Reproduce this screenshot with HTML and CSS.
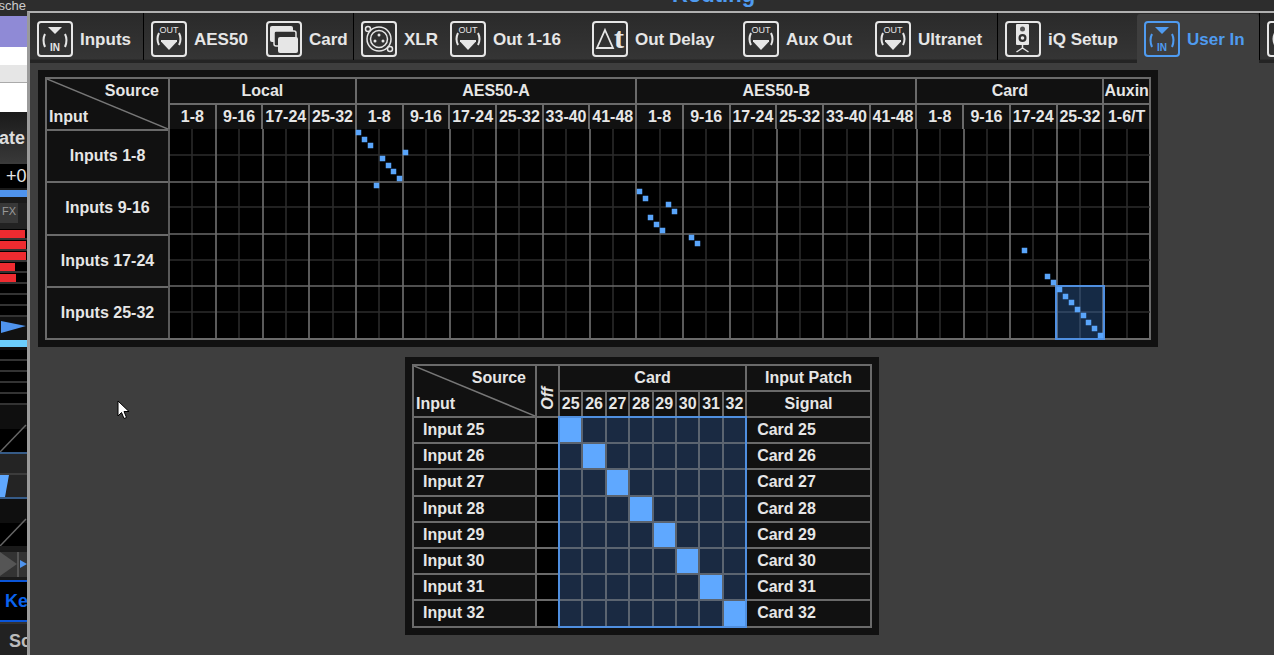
FILE: index.html
```html
<!DOCTYPE html>
<html lang="en">
<head>
    <meta charset="UTF-8">
    <title>Routing</title>
    <link rel="stylesheet" href="styles.css">
</head>
<body>
    <svg class="icon-defs" width="0" height="0">
        <symbol id="icon-in" viewBox="0 0 36 36">
            <rect x="1" y="1" width="34" height="34" rx="3" fill="none" stroke="currentColor" stroke-width="2"/>
            <path d="M11 6h14l-7 7z" fill="currentColor"/>
            <path d="M8 13q-3 6 0 13M28 13q3 6 0 13" fill="none" stroke="currentColor" stroke-width="2"/>
            <text x="18" y="30" text-anchor="middle" class="icon-in-label">IN</text>
        </symbol>
        <symbol id="icon-out" viewBox="0 0 36 36">
            <rect x="1" y="1" width="34" height="34" rx="3" fill="none" stroke="currentColor" stroke-width="2"/>
            <text x="18" y="12" text-anchor="middle" class="icon-label">OUT</text>
            <path d="M8 12q-3 6 0 12M28 12q3 6 0 12" fill="none" stroke="currentColor" stroke-width="2"/>
            <path d="M10 19h16v1.500l-8 8.500-8-8.500z" fill="currentColor"/>
        </symbol>
        <symbol id="icon-card" viewBox="0 0 36 36">
            <rect x="1" y="1" width="34" height="34" rx="3" fill="none" stroke="currentColor" stroke-width="2"/>
            <rect x="4" y="5" width="23" height="16" rx="2" fill="currentColor"/>
            <rect x="8" y="10" width="22" height="15" rx="2" fill="#2f2f2f" stroke="currentColor" stroke-width="1.500"/>
            <rect x="12" y="16" width="20" height="16" rx="2" fill="currentColor"/>
        </symbol>
        <symbol id="icon-xlr" viewBox="0 0 36 36">
            <rect x="1" y="1" width="34" height="34" rx="3" fill="none" stroke="currentColor" stroke-width="2"/>
            <circle cx="18" cy="18" r="12" fill="none" stroke="currentColor" stroke-width="1.500"/>
            <circle cx="18" cy="18" r="8.500" fill="none" stroke="currentColor" stroke-width="1.500"/>
            <circle cx="7" cy="8" r="2.500" fill="#2f2f2f" stroke="currentColor" stroke-width="1.500"/>
            <circle cx="29" cy="28" r="2.500" fill="#2f2f2f" stroke="currentColor" stroke-width="1.500"/>
            <circle cx="18" cy="14" r="1.500" fill="currentColor"/>
            <circle cx="14" cy="20" r="1.500" fill="currentColor"/>
            <circle cx="22" cy="20" r="1.500" fill="currentColor"/>
        </symbol>
        <symbol id="icon-delay" viewBox="0 0 36 36">
            <rect x="1" y="1" width="34" height="34" rx="3" fill="none" stroke="currentColor" stroke-width="2"/>
            <path d="M13 9l8 18H5z" fill="none" stroke="currentColor" stroke-width="1.800"/>
            <text x="27" y="27" text-anchor="middle" class="icon-t">t</text>
        </symbol>
        <symbol id="icon-speaker" viewBox="0 0 36 36">
            <rect x="1" y="1" width="34" height="34" rx="3" fill="none" stroke="currentColor" stroke-width="2"/>
            <rect x="11" y="3" width="13" height="21" rx="1" fill="currentColor"/>
            <circle cx="17.500" cy="8" r="2.500" fill="#555"/>
            <circle cx="17.500" cy="17" r="4" fill="#2f2f2f"/>
            <circle cx="17.500" cy="17" r="1.800" fill="currentColor"/>
            <path d="M17.500 24v4M17.500 27l-6 4M17.500 27l6 4" fill="none" stroke="currentColor" stroke-width="1.500"/>
        </symbol>
    </svg>

    <aside class="side-strip">
        <div class="strip-caption"><span>ösche</span></div>
        <div class="strip-purple"></div>
        <div class="strip-white"></div>
        <div class="strip-pale"></div>
        <div class="strip-white strip-tall"></div>
        <div class="strip-name">ate</div>
        <div class="strip-gain">+0</div>
        <div class="strip-level"></div>
        <div class="strip-fx"><span>FX</span></div>
        <div class="meter"><i class="bar-red" style="width:25px"></i></div>
        <div class="meter"><i class="bar-red" style="width:26px"></i></div>
        <div class="meter"><i class="bar-red" style="width:26px"></i></div>
        <div class="meter"><i class="bar-red" style="width:15px"></i></div>
        <div class="meter"><i class="bar-red" style="width:16px"></i></div>
        <div class="meter"></div>
        <div class="meter"></div>
        <div class="meter"></div>
        <svg class="strip-marker" width="27" height="20"><path d="M1 4l25 5-25 7z" fill="#4f94ee"/></svg>
        <div class="strip-cyan"></div>
        <div class="meter"></div>
        <div class="meter"></div>
        <div class="meter"></div>
        <div class="meter"></div>
        <div class="meter"></div>
        <svg width="27" height="47"><rect width="27" height="24" fill="#0f0f0f"/><rect y="24" width="27" height="23" fill="#000"/><path d="M0 47l26-27" stroke="#666" stroke-width="1.500"/></svg>
        <svg width="27" height="47"><rect width="27" height="47" fill="#242424"/><path d="M0 1h27M0 46h27" stroke="#3c6ea8" stroke-width="1.500"/><path d="M0 23h9l-4 22H0z" fill="#5fa8ff"/><path d="M0 22h27" stroke="#555"/></svg>
        <svg width="27" height="47"><rect width="27" height="24" fill="#0f0f0f"/><rect y="24" width="27" height="23" fill="#000"/><path d="M0 47l26-27" stroke="#666" stroke-width="1.500"/></svg>
        <svg class="strip-play" width="27" height="25"><rect width="27" height="25" fill="#333"/><path d="M0 0l17 12L0 24z" fill="#555"/><path d="M18 0v25" stroke="#555" stroke-width="2"/><path d="M20 8l7 4-7 4z" fill="#4f94ee"/></svg>
        <div class="strip-key">Ke</div>
        <div class="strip-solo">So</div>
    </aside>

    <div class="window">
        <div class="title-bar"><span class="title-text">Routing</span></div>
        <div class="frame">
            <nav class="tab-bar">
                <a class="tab"><svg class="tab-icon"><use href="#icon-in"/></svg>Inputs</a>
                <a class="tab tab-split"><svg class="tab-icon"><use href="#icon-out"/></svg>AES50</a>
                <a class="tab"><svg class="tab-icon"><use href="#icon-card"/></svg>Card</a>
                <a class="tab tab-split"><svg class="tab-icon"><use href="#icon-xlr"/></svg>XLR</a>
                <a class="tab"><svg class="tab-icon"><use href="#icon-out"/></svg>Out 1-16</a>
                <a class="tab"><svg class="tab-icon"><use href="#icon-delay"/></svg>Out Delay</a>
                <a class="tab"><svg class="tab-icon"><use href="#icon-out"/></svg>Aux Out</a>
                <a class="tab"><svg class="tab-icon"><use href="#icon-out"/></svg>Ultranet</a>
                <a class="tab tab-split"><svg class="tab-icon"><use href="#icon-speaker"/></svg>iQ Setup</a>
                <a class="tab tab-active"><svg class="tab-icon"><use href="#icon-in"/></svg>User In</a>
                <a class="tab tab-split"><svg class="tab-icon"><use href="#icon-out"/></svg></a>
            </nav>

            <main class="content">
                <section class="panel">
                    <div class="routing-grid">
                        <div class="cell corner">
                            <svg class="corner-line" viewBox="0 0 100 100" preserveAspectRatio="none"><path d="M0 0L100 100" vector-effect="non-scaling-stroke"/></svg>
                            <span class="corner-source">Source</span>
                            <span class="corner-input">Input</span>
                        </div>
                        <div class="cell head span-4">Local</div>
                        <div class="cell head span-6">AES50-A</div>
                        <div class="cell head span-6">AES50-B</div>
                        <div class="cell head span-4">Card</div>
                        <div class="cell head">Auxin</div>

                        <div class="cell">1-8</div><div class="cell">9-16</div><div class="cell">17-24</div><div class="cell">25-32</div>
                        <div class="cell">1-8</div><div class="cell">9-16</div><div class="cell">17-24</div><div class="cell">25-32</div><div class="cell">33-40</div><div class="cell">41-48</div>
                        <div class="cell">1-8</div><div class="cell">9-16</div><div class="cell">17-24</div><div class="cell">25-32</div><div class="cell">33-40</div><div class="cell">41-48</div>
                        <div class="cell">1-8</div><div class="cell">9-16</div><div class="cell">17-24</div><div class="cell">25-32</div>
                        <div class="cell">1-6/T</div>

                        <div class="cell row-label">Inputs 1-8</div>
                        <svg class="crosspoints" viewBox="-1 0 981 209">
                            <path class="line-dim" d="M23 0V209M70 0V209M117 0V209M164 0V209M210 0V209M257 0V209M304 0V209M350 0V209M397 0V209M444 0V209M491 0V209M537 0V209M584 0V209M631 0V209M678 0V209M724 0V209M771 0V209M818 0V209M864 0V209M911 0V209M958 0V209M0 26H981M0 78H981M0 131H981M0 183H981"/>
                            <path class="line-main" d="M0 0V209M47 0V209M94 0V209M140 0V209M187 0V209M234 0V209M281 0V209M327 0V209M374 0V209M421 0V209M467 0V209M514 0V209M561 0V209M608 0V209M654 0V209M701 0V209M748 0V209M795 0V209M841 0V209M888 0V209M934 0V209M0 53H981M0 105H981M0 157H981"/>
                            <rect class="selection-box" x="887" y="157" width="48" height="53"/>
                            <g class="dots">
                                <rect x="187" y="1" width="5" height="5"/><rect x="193" y="8" width="5" height="5"/><rect x="199" y="14" width="5" height="5"/>
                                <rect x="234" y="21" width="5" height="5"/><rect x="211" y="27" width="5" height="5"/><rect x="217" y="34" width="5" height="5"/>
                                <rect x="222" y="40" width="5" height="5"/><rect x="228" y="47" width="5" height="5"/><rect x="205" y="54" width="5" height="5"/>
                                <rect x="468" y="60" width="5" height="5"/><rect x="474" y="67" width="5" height="5"/><rect x="497" y="73" width="5" height="5"/>
                                <rect x="503" y="80" width="5" height="5"/><rect x="479" y="86" width="5" height="5"/><rect x="485" y="93" width="5" height="5"/>
                                <rect x="491" y="99" width="5" height="5"/><rect x="520" y="106" width="5" height="5"/><rect x="526" y="112" width="5" height="5"/>
                                <rect x="853" y="119" width="5" height="5"/><rect x="876" y="145" width="5" height="5"/><rect x="882" y="151" width="5" height="5"/>
                                <rect x="888" y="158" width="5" height="5"/><rect x="894" y="165" width="5" height="5"/><rect x="900" y="171" width="5" height="5"/>
                                <rect x="906" y="178" width="5" height="5"/><rect x="912" y="184" width="5" height="5"/><rect x="917" y="191" width="5" height="5"/>
                                <rect x="923" y="197" width="5" height="5"/><rect x="929" y="204" width="5" height="5"/>
                            </g>
                        </svg>
                        <div class="cell row-label">Inputs 9-16</div>
                        <div class="cell row-label">Inputs 17-24</div>
                        <div class="cell row-label">Inputs 25-32</div>
                    </div>
                </section>

                <section class="panel panel-patch">
                    <div class="patch-grid">
                        <div class="cell corner">
                            <svg class="corner-line" viewBox="0 0 100 100" preserveAspectRatio="none"><path d="M0 0L100 100" vector-effect="non-scaling-stroke"/></svg>
                            <span class="corner-source">Source</span>
                            <span class="corner-input">Input</span>
                        </div>
                        <div class="cell cell-off"><span>Off</span></div>
                        <div class="cell head span-8">Card</div>
                        <div class="cell head">Input Patch</div>

                        <div class="cell">25</div><div class="cell">26</div><div class="cell">27</div><div class="cell">28</div><div class="cell">29</div><div class="cell">30</div><div class="cell">31</div><div class="cell">32</div>
                        <div class="cell">Signal</div>

                        <div class="cell patch-name">Input 25</div><i class="off"></i><i class="pt on"></i><i class="pt"></i><i class="pt"></i><i class="pt"></i><i class="pt"></i><i class="pt"></i><i class="pt"></i><i class="pt"></i><div class="cell patch-signal">Card 25</div>
                        <div class="cell patch-name">Input 26</div><i class="off"></i><i class="pt"></i><i class="pt on"></i><i class="pt"></i><i class="pt"></i><i class="pt"></i><i class="pt"></i><i class="pt"></i><i class="pt"></i><div class="cell patch-signal">Card 26</div>
                        <div class="cell patch-name">Input 27</div><i class="off"></i><i class="pt"></i><i class="pt"></i><i class="pt on"></i><i class="pt"></i><i class="pt"></i><i class="pt"></i><i class="pt"></i><i class="pt"></i><div class="cell patch-signal">Card 27</div>
                        <div class="cell patch-name">Input 28</div><i class="off"></i><i class="pt"></i><i class="pt"></i><i class="pt"></i><i class="pt on"></i><i class="pt"></i><i class="pt"></i><i class="pt"></i><i class="pt"></i><div class="cell patch-signal">Card 28</div>
                        <div class="cell patch-name">Input 29</div><i class="off"></i><i class="pt"></i><i class="pt"></i><i class="pt"></i><i class="pt"></i><i class="pt on"></i><i class="pt"></i><i class="pt"></i><i class="pt"></i><div class="cell patch-signal">Card 29</div>
                        <div class="cell patch-name">Input 30</div><i class="off"></i><i class="pt"></i><i class="pt"></i><i class="pt"></i><i class="pt"></i><i class="pt"></i><i class="pt on"></i><i class="pt"></i><i class="pt"></i><div class="cell patch-signal">Card 30</div>
                        <div class="cell patch-name">Input 31</div><i class="off"></i><i class="pt"></i><i class="pt"></i><i class="pt"></i><i class="pt"></i><i class="pt"></i><i class="pt"></i><i class="pt on"></i><i class="pt"></i><div class="cell patch-signal">Card 31</div>
                        <div class="cell patch-name">Input 32</div><i class="off"></i><i class="pt"></i><i class="pt"></i><i class="pt"></i><i class="pt"></i><i class="pt"></i><i class="pt"></i><i class="pt"></i><i class="pt on"></i><div class="cell patch-signal">Card 32</div>

                        <div class="patch-outline"></div>
                    </div>
                </section>
            </main>
        </div>
    </div>

    <svg class="cursor" width="14" height="20" viewBox="0 0 14 20">
        <path d="M1 1v15l3.500-3.500 2.500 6 2.500-1-2.500-6h5z" fill="#fff" stroke="#000"/>
    </svg>
</body>
</html>
```

FILE: styles.css
```css
* {
    box-sizing: border-box;
}
html, body {
    margin: 0;
    height: 100%;
}
body {
    display: flex;
    width: 1274px;
    height: 655px;
    overflow: hidden;
    position: relative;
    background-color: #3e3e3e;
    font-family: "Liberation Sans", Arial, sans-serif;
    font-weight: bold;
    font-size: 16px;
    color: #e6e6e6;
}
.icon-defs {
    position: absolute;
}
.icon-label {
    font-family: "Liberation Sans", Arial, sans-serif;
    font-size: 9px;
    font-weight: normal;
    fill: currentColor;
}
.icon-in-label {
    font-family: "Liberation Sans", Arial, sans-serif;
    font-size: 10px;
    font-weight: bold;
    fill: currentColor;
}
.icon-t {
    font-family: "Liberation Serif", serif;
    font-size: 30px;
    font-weight: bold;
    fill: currentColor;
}

/* channel strip cut off on the left */
.side-strip {
    flex: 0 0 27px;
    height: 655px;
    overflow: hidden;
    background-color: #1a1a1a;
}
.side-strip svg {
    display: block;
}
.strip-caption {
    display: flex;
    justify-content: flex-end;
    height: 16px;
    overflow: hidden;
    background-color: #2c2c2c;
    padding-right: 1px;
    font-size: 13px;
    font-weight: normal;
    line-height: 12px;
    white-space: nowrap;
    color: #ccc;
}
.strip-caption span {
    flex: none;
}
.strip-purple {
    height: 31px;
    background-color: #8f8ad6;
}
.strip-white {
    height: 18px;
    background-color: #fff;
}
.strip-tall {
    height: 30px;
    border-top: 1px solid #aaa;
}
.strip-pale {
    height: 17px;
    background-color: #e6e6e6;
}
.strip-name {
    height: 52px;
    margin-left: -1px;
    padding-top: 16px;
    background: linear-gradient(#1a1a1a, #383838);
    border-bottom: 2px solid #3a3a3a;
    font-size: 18px;
    line-height: 20px;
    white-space: nowrap;
    color: #ddd;
}
.strip-gain {
    height: 24px;
    background-color: #000;
    padding-left: 6px;
    font-size: 18px;
    font-weight: normal;
    line-height: 24px;
    white-space: nowrap;
    overflow: hidden;
}
.strip-level {
    height: 15px;
    border-top: 2px solid #1a1a1a;
    border-bottom: 6px solid #1a1a1a;
    background-clip: padding-box;
    background-color: #4f94ee;
}
.strip-fx {
    height: 26px;
    background-color: #222;
}
.strip-fx span {
    display: block;
    width: 18px;
    height: 20px;
    background-color: #383838;
    font-size: 11px;
    font-weight: normal;
    line-height: 16px;
    text-align: center;
    color: #999;
}
.meter {
    height: 11px;
    padding-top: 1px;
    background-color: #000;
    border-bottom: 2px solid #333;
}
.bar-red {
    display: block;
    height: 8px;
    background-color: #ee2b30;
}
.strip-marker {
    background-color: #111;
}
.strip-cyan {
    height: 13px;
    border-top: 3px solid #111;
    border-bottom: 3px solid #111;
    background-clip: padding-box;
    background-color: #6bcdfb;
}
.strip-play {
    margin-top: 6px;
}
.strip-key {
    height: 42px;
    margin-top: 3px;
    background-color: #000;
    border-top: 2px solid #0a55d8;
    border-bottom: 2px solid #0a55d8;
    padding-left: 5px;
    font-size: 18px;
    line-height: 38px;
    white-space: nowrap;
    overflow: hidden;
    color: #0a63ee;
}
.strip-solo {
    height: 40px;
    border-top: 2px solid #333;
    background-color: #222;
    padding-left: 9px;
    font-size: 18px;
    line-height: 34px;
    white-space: nowrap;
    overflow: hidden;
    color: #bbb;
}

/* routing window */
.window {
    flex: 1;
    min-width: 0;
    display: flex;
    flex-direction: column;
}
.title-bar {
    height: 11px;
    flex: none;
    overflow: hidden;
    background-color: #2d2d2d;
    padding-left: 645px;
}
.title-text {
    display: block;
    margin-top: -18px;
    font-size: 22px;
    line-height: 26px;
    color: #4f9bf0;
}
.frame {
    flex: 1;
    min-height: 0;
    overflow: hidden;
    border-top: 2px solid #b0b0b0;
    border-left: 3px solid #9a9a9a;
}
.tab-bar {
    height: 50px;
    margin-left: -1px;
    display: grid;
    grid-template-columns: 114px 115px 95px 89px 142px 151px 132px 130px 140px 122px 1fr;
    background: linear-gradient(#2a2a2a 0, #353535 46px, #242424 47px, #242424 50px);
}
.tab {
    display: flex;
    align-items: flex-start;
    gap: 7px;
    height: 47px;
    padding: 8px 0 0 7px;
    border-left: 1px solid transparent;
    font-size: 17px;
    line-height: 38px;
    color: #e6e6e6;
    white-space: nowrap;
}
.tab-split {
    border-left-color: #000;
}
.tab-active {
    height: 50px;
    margin-top: 1px;
    padding: 7px 0 0 6px;
    border-radius: 3px 3px 0 0;
    background-color: #3e3e3e;
    color: #4f9bf0;
}
.tab-icon {
    flex: none;
    width: 36px;
    height: 36px;
}
.content {
    padding: 7px 0 0 8px;
}

.panel {
    width: max-content;
    padding: 7px;
    background-color: #111;
}
.panel-patch {
    margin: 10px 0 0 367px;
}
.routing-grid {
    display: grid;
    width: 1106px;
    grid-template-columns: 123px repeat(21, 1fr);
    grid-template-rows: 26px 26px repeat(4, 52.250px);
    border-right: 2px solid #6a6a6a;
    border-bottom: 2px solid #6a6a6a;
}
.patch-grid {
    position: relative;
    display: grid;
    width: 460px;
    grid-template-columns: 123px 23px repeat(8, 23.400px) 1fr;
    grid-template-rows: 26px 26px repeat(8, 26.200px);
    border-right: 2px solid #6a6a6a;
    border-bottom: 2px solid #6a6a6a;
}
.cell {
    display: flex;
    align-items: center;
    justify-content: center;
    border-top: 2px solid #6a6a6a;
    border-left: 2px solid #6a6a6a;
    background-color: #111;
    white-space: nowrap;
    line-height: 1;
}
.head {
    padding-bottom: 1px;
}
.span-4 {
    grid-column: span 4;
}
.span-6 {
    grid-column: span 6;
}
.span-8 {
    grid-column: span 8;
}
.corner {
    grid-row: span 2;
    position: relative;
    display: block;
}
.corner-line {
    position: absolute;
    left: 0;
    top: 0;
    width: 100%;
    height: 100%;
}
.corner-line path {
    fill: none;
    stroke: #777;
    stroke-width: 1.500;
}
.corner-source {
    position: absolute;
    top: 4px;
    right: 9px;
}
.corner-input {
    position: absolute;
    bottom: 4px;
    left: 2px;
}
.row-label {
    grid-column: 1;
}
.crosspoints {
    grid-column: 2 / -1;
    grid-row: 3 / span 4;
    width: 100%;
    height: 100%;
    background-color: #000;
    overflow: visible;
}
.line-dim {
    fill: none;
    stroke: #2c2c2c;
    stroke-width: 1.500;
}
.line-main {
    fill: none;
    stroke: #6a6a6a;
    stroke-width: 1.700;
}
.selection-box {
    fill: rgba(70, 140, 230, 0.3);
    stroke: #4f8fe0;
    stroke-width: 2;
}
.dots rect {
    fill: #5aa5fa;
    stroke: #5aa5fa;
    stroke-width: 0.500;
}

.cell-off {
    grid-row: span 2;
    align-items: flex-end;
    padding: 0 0 6px 1px;
}
.cell-off span {
    writing-mode: vertical-rl;
    transform: rotate(180deg);
    font-style: italic;
}
.patch-name {
    justify-content: flex-start;
    padding-left: 9px;
}
.patch-signal {
    justify-content: flex-start;
    padding-left: 10px;
}
.off {
    display: block;
    background-color: #000;
    border-top: 2px solid #6a6a6a;
    border-left: 2px solid #6a6a6a;
}
.pt {
    display: block;
    background-color: #1a2a42;
    border-top: 2px solid #5b6470;
    border-left: 2px solid #5b6470;
}
.pt.on {
    background-color: #5fa8ff;
}
.patch-outline {
    position: absolute;
    grid-column: 3 / span 8;
    grid-row: 3 / span 8;
    left: 0;
    top: 0;
    right: -2px;
    bottom: -2px;
    border: 2px solid #4f8fe0;
    pointer-events: none;
}

.cursor {
    position: absolute;
    left: 117px;
    top: 400px;
}
```
